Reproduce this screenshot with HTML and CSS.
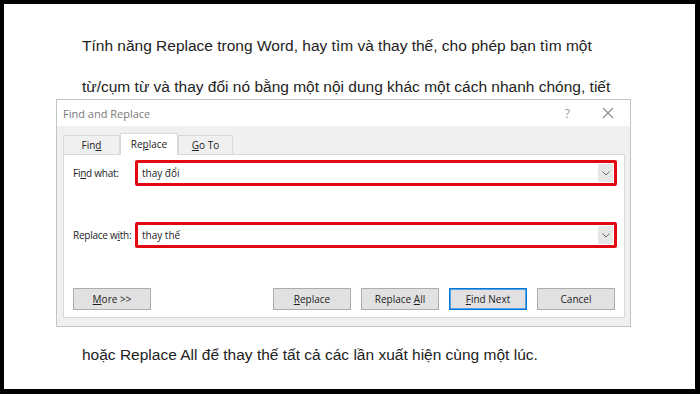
FILE: index.html
```html
<!DOCTYPE html>
<html lang="vi">
<head>
    <meta charset="UTF-8">
    <title>Find and Replace</title>
    <link rel="stylesheet" href="styles.css">
</head>
<body>
    <div class="page">
        <p class="line first">Tính năng Replace trong Word, hay tìm và thay thế, cho phép bạn tìm một</p>
        <p class="line">từ/cụm từ và thay đổi nó bằng một nội dung khác một cách nhanh chóng, tiết</p>

        <!-- Find and Replace dialog -->
        <div class="dialog">
            <div class="title-bar">
                <span class="title">Find and Replace</span>
                <span class="help">?</span>
                <svg class="close" width="12" height="12" viewBox="0 0 12 12">
                    <path d="M1 1 L11 11 M11 1 L1 11" stroke="#8a8a8a" stroke-width="1.1" fill="none"/>
                </svg>
            </div>
            <div class="body">
                <div class="tabs">
                    <div class="tab">Fin<u>d</u></div>
                    <div class="tab active">Re<u>p</u>lace</div>
                    <div class="tab"><u>G</u>o To</div>
                </div>
                <div class="panel">
                    <div class="field">
                        <span class="label">Fi<u>n</u>d what:</span>
                        <div class="combo">
                            <span class="value">thay đổi</span>
                            <span class="drop">
                                <svg width="8" height="5" viewBox="0 0 8 5"><path d="M0.5 0.5 L4 4 L7.5 0.5" stroke="#666" fill="none"/></svg>
                            </span>
                        </div>
                    </div>
                    <div class="field second">
                        <span class="label">Replace w<u>i</u>th:</span>
                        <div class="combo">
                            <span class="value">thay thế</span>
                            <span class="drop">
                                <svg width="8" height="5" viewBox="0 0 8 5"><path d="M0.5 0.5 L4 4 L7.5 0.5" stroke="#666" fill="none"/></svg>
                            </span>
                        </div>
                    </div>
                    <div class="buttons">
                        <button class="more"><u>M</u>ore &gt;&gt;</button>
                        <div class="spacer"></div>
                        <button><u>R</u>eplace</button>
                        <button>Replace <u>A</u>ll</button>
                        <button class="default"><u>F</u>ind Next</button>
                        <button>Cancel</button>
                    </div>
                </div>
            </div>
        </div>

        <p class="line last">hoặc Replace All để thay thế tất cả các lần xuất hiện cùng một lúc.</p>
    </div>
</body>
</html>
```

FILE: styles.css
```css
/* General Styles */
body {
    margin: 0;
    padding: 4px 5px 5px 4px;
    background-color: #000;
}

.page {
    background-color: #fff;
    height: 385px;
    padding: 0 0 0 52px;
    box-sizing: border-box;
    overflow: hidden;
}

.line {
    font-family: "Liberation Sans", Arial, sans-serif;
    font-size: 15.5px;
    line-height: 20px;
    color: #222;
    margin: 21px 0 0 26px;
}

.line.first {
    margin-top: 0;
    padding-top: 32px;
}

.line.last {
    margin-top: 18px;
}

/* Dialog */
.dialog {
    width: 573px;
    height: 226px;
    margin-top: 2px;
    border: 1px solid #c4c4c4;
    font-family: "Open Sans", "Noto Sans", sans-serif;
    font-size: 10px;
    color: #222;
    display: flex;
    flex-direction: column;
}

.title-bar {
    height: 26px;
    background-color: #fff;
    display: flex;
    align-items: center;
    padding: 0 16px 0 6px;
}

.title {
    color: #7a7a7a;
    font-size: 11px;
    flex: 1;
}

.help {
    color: #9a9a9a;
    font-size: 12px;
    margin-right: 32px;
}

.body {
    flex: 1;
    background-color: #f0f0f0;
    padding: 7px 5px 8px 6px;
    display: flex;
    flex-direction: column;
}

.tabs {
    display: flex;
    align-items: flex-end;
    height: 21px;
}

.tab {
    height: 19px;
    line-height: 19px;
    border: 1px solid #d9d9d9;
    border-bottom: none;
    background-color: #f0f0f0;
    text-align: center;
    box-sizing: border-box;
}

.tab:nth-child(1) { width: 57px; }
.tab:nth-child(2) { width: 58px; }
.tab:nth-child(3) { width: 55px; }

.tab.active {
    height: 22px;
    line-height: 20px;
    background-color: #fff;
    border-color: #d9d9d9;
    position: relative;
    margin-bottom: -1px;
    z-index: 1;
}

.panel {
    flex: 1;
    background-color: #fff;
    border: 1px solid #d9d9d9;
    padding: 5px 7px 0 9px;
}

.field {
    display: flex;
    align-items: center;
    height: 26px;
}

.field.second {
    margin-top: 36px;
}

.label {
    width: 62px;
    flex-shrink: 0;
    white-space: nowrap;
    letter-spacing: -0.25px;
}

.combo {
    flex: 1;
    height: 26px;
    box-sizing: border-box;
    border: 3px solid #e30613;
    border-radius: 2px;
    display: flex;
    align-items: center;
    padding-left: 4px;
    background-color: #fff;
}

.value {
    flex: 1;
}

.drop {
    width: 15px;
    height: 18px;
    margin-right: 1px;
    background-color: #e6e6e6;
    display: flex;
    align-items: center;
    justify-content: center;
}

.buttons {
    display: flex;
    margin: 40px 2px 0 0;
    gap: 10px;
}

.spacer {
    flex: 1;
}

button {
    width: 78px;
    height: 22px;
    padding: 0;
    background-color: #e1e1e1;
    border: 1px solid #adadad;
    font-family: "Open Sans", "Noto Sans", sans-serif;
    font-size: 10px;
    color: #222;
}

button.default {
    border: 1px solid #0078d7;
    box-shadow: inset 0 0 0 1px #5aa0e0;
}
```
